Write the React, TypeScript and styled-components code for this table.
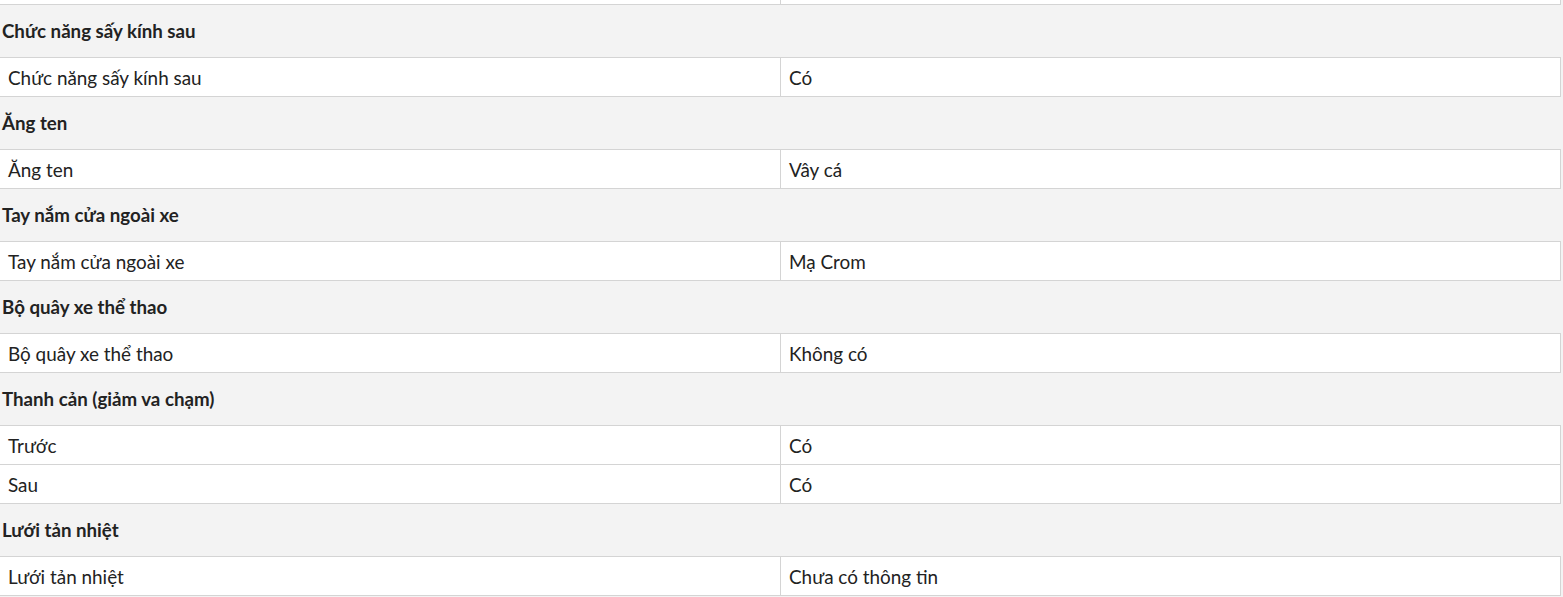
import styled, { createGlobalStyle } from 'styled-components'

const GlobalStyle = createGlobalStyle`
  html, body {
    margin: 0;
    padding: 0;
    background: #f3f3f3;
    font-family: Lato, "Noto Sans", sans-serif;
    color: #222;
    overflow: hidden;
  }
`

const StyledSpecs = styled.div`
  width: 1563px;
  margin-top: -35px;
`

const StyledGroupTitle = styled.div`
  height: 52px;
  display: flex;
  align-items: center;
  padding-left: 2px;
  font-size: 18.7px;
  font-weight: 700;
  background: #f3f3f3;
`

const StyledTable = styled.table`
  width: 1562px;
  margin-left: -1px;
  border-collapse: collapse;
  background: #fff;
  table-layout: fixed;
`

const StyledCell = styled.td`
  height: 36px;
  padding: 2px 8px 0;
  border: 1px solid #d4d4d4;
  font-size: 18.9px;
  vertical-align: middle;
  box-sizing: content-box;
  line-height: 22px;
`

type Group = {
  title?: string
  rows: [string, string][]
}

const groups: Group[] = [
  { rows: [['', '']] },
  { title: 'Chức năng sấy kính sau', rows: [['Chức năng sấy kính sau', 'Có']] },
  { title: 'Ăng ten', rows: [['Ăng ten', 'Vây cá']] },
  { title: 'Tay nắm cửa ngoài xe', rows: [['Tay nắm cửa ngoài xe', 'Mạ Crom']] },
  { title: 'Bộ quây xe thể thao', rows: [['Bộ quây xe thể thao', 'Không có']] },
  {
    title: 'Thanh cản (giảm va chạm)',
    rows: [
      ['Trước', 'Có'],
      ['Sau', 'Có'],
    ],
  },
  { title: 'Lưới tản nhiệt', rows: [['Lưới tản nhiệt', 'Chưa có thông tin']] },
]

export default function App() {
  return (
    <>
      <GlobalStyle />
      <StyledSpecs>
        {groups.map((group, i) => (
          <div key={i}>
            {group.title && <StyledGroupTitle>{group.title}</StyledGroupTitle>}
            <StyledTable>
              <colgroup>
                <col style={{ width: 781 }} />
                <col />
              </colgroup>
              <tbody>
                {group.rows.map(([label, value], j) => (
                  <tr key={j}>
                    <StyledCell>{label}</StyledCell>
                    <StyledCell>{value}</StyledCell>
                  </tr>
                ))}
              </tbody>
            </StyledTable>
          </div>
        ))}
      </StyledSpecs>
    </>
  )
}
